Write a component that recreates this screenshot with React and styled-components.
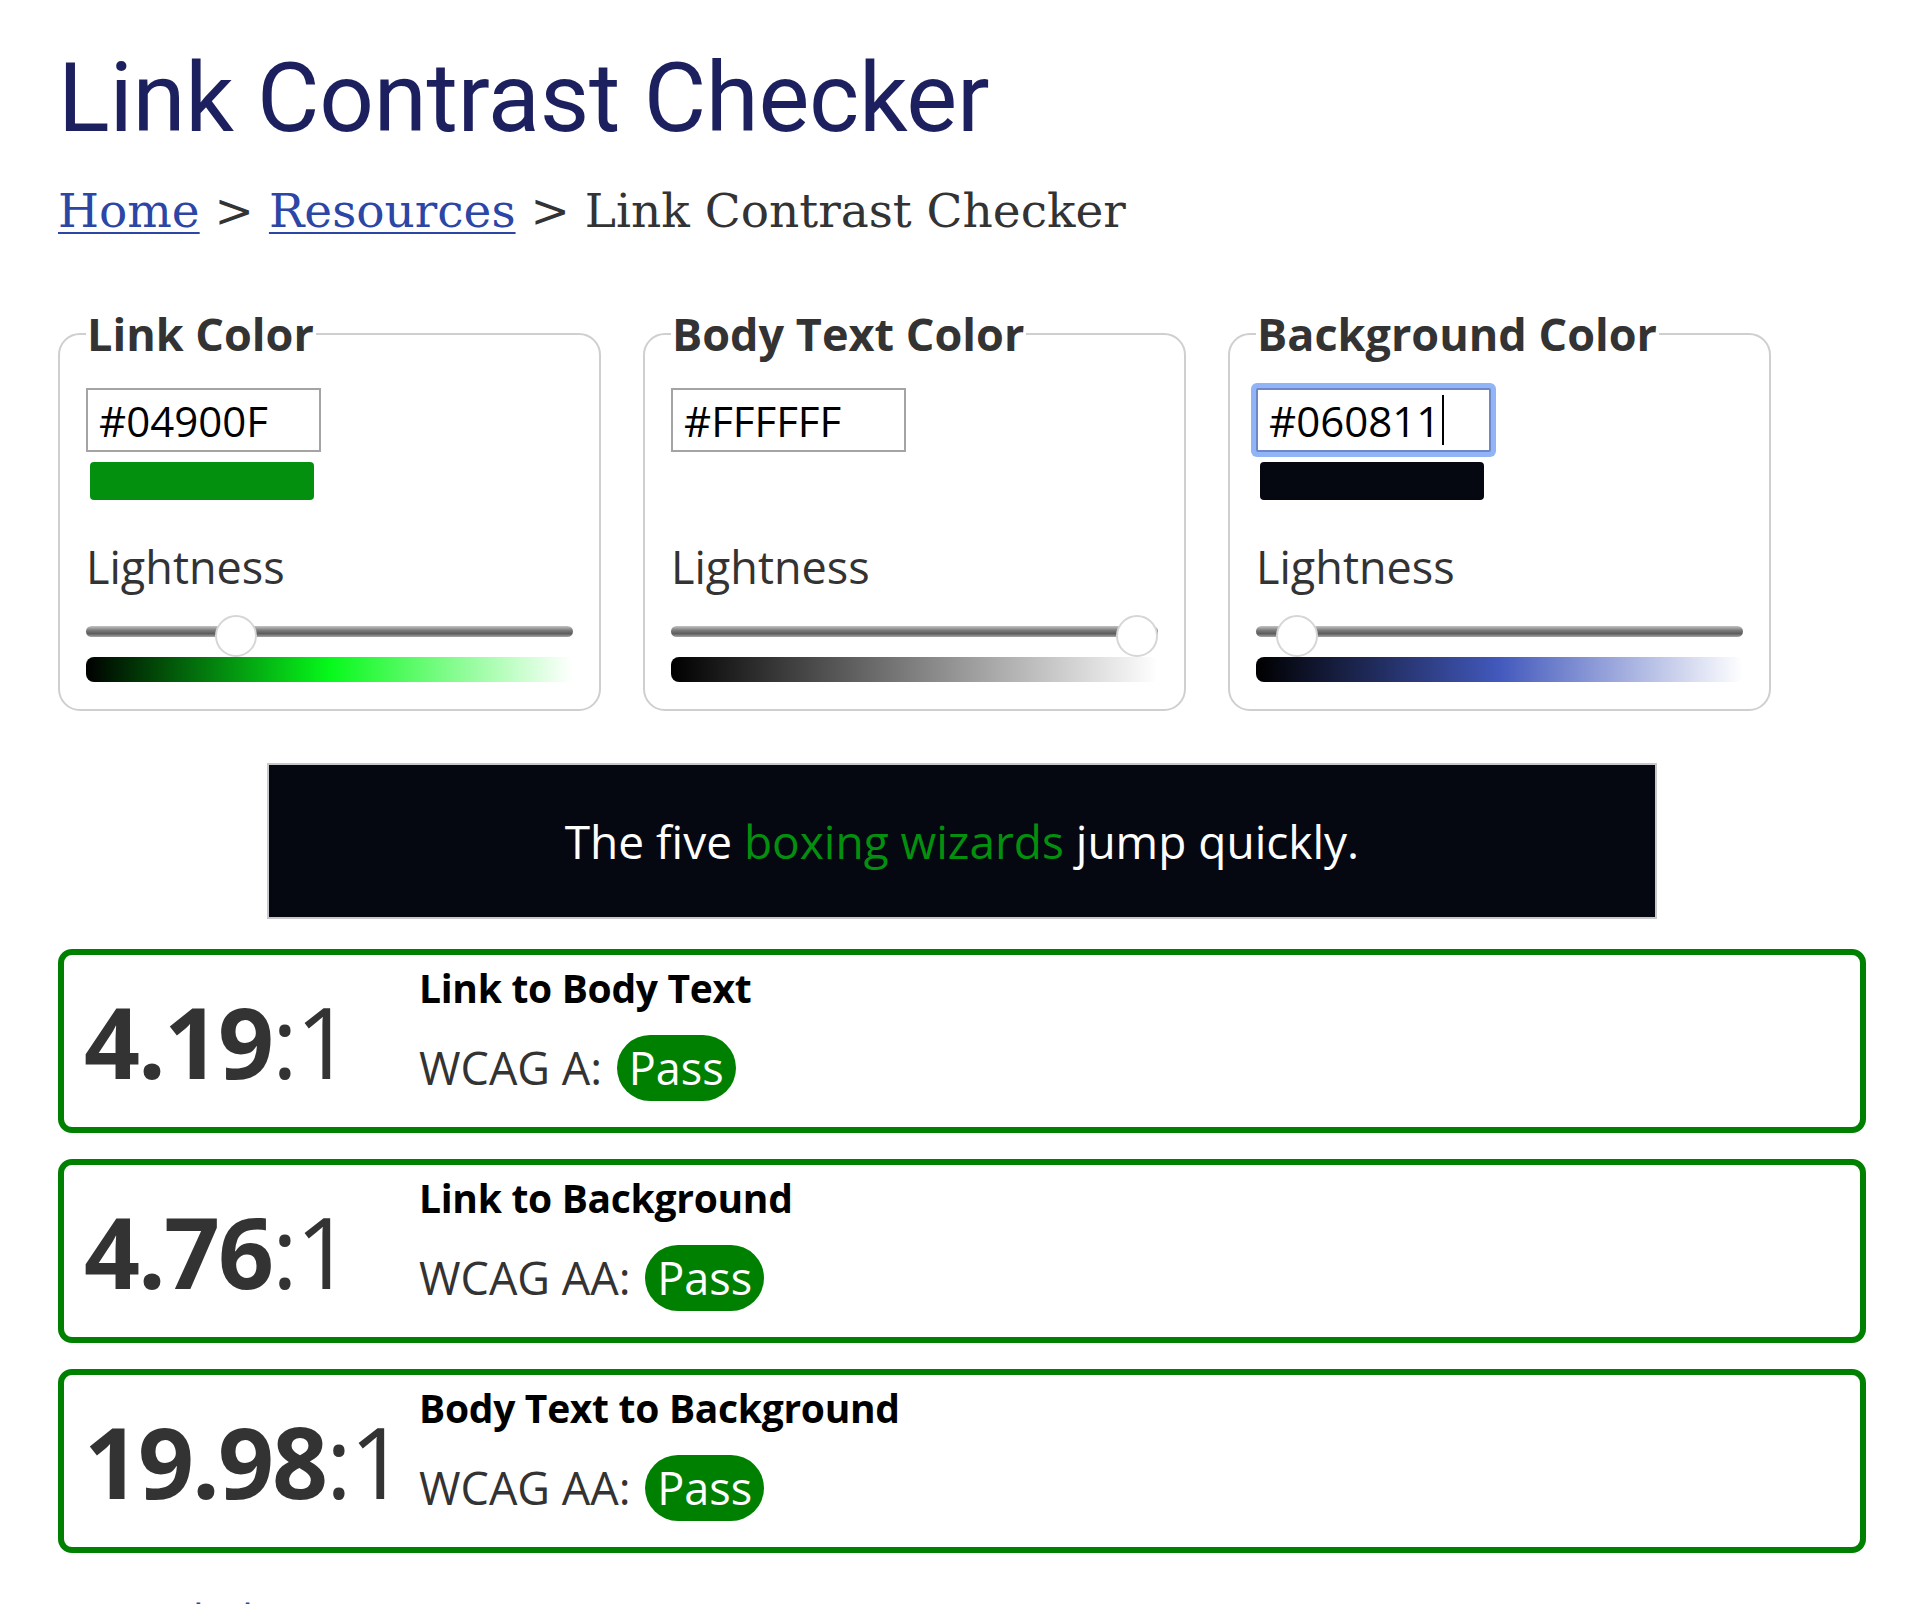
import React from 'react';
import styled, { createGlobalStyle, css } from 'styled-components';

const GlobalStyle = createGlobalStyle`
  * { box-sizing: border-box; }
  html, body { margin: 0; padding: 0; background: #fff; }
  body {
    font-family: "Open Sans", "Liberation Sans", sans-serif;
    color: #333;
  }
`;

const Page = styled.main`
  height: 1604px;
  overflow: hidden;
  padding: 42px 54px 0 58px;
`;

const Title = styled.h1`
  margin: 0;
  font-family: Roboto, "Liberation Sans", sans-serif;
  font-weight: 400;
  font-size: 96px;
  line-height: 112px;
  color: #1d205e;
  letter-spacing: -0.3px;
`;

const Breadcrumb = styled.nav`
  margin-top: 31px;
  font-family: "DejaVu Serif", "Liberation Serif", serif;
  font-size: 47px;
  line-height: 51px;
  color: #333;
  white-space: nowrap;
`;

const Crumb = styled.a`
  color: #2c46a6;
  text-decoration: underline;
  text-decoration-thickness: 2px;
  text-underline-offset: 5px;
`;

const Controls = styled.div`
  display: flex;
  gap: 42px;
  margin-top: 68px;
`;

const Panel = styled.fieldset`
  width: 543px;
  min-width: 0;
  margin: 0;
  padding: 24px 26px 27px;
  border: 2px solid #cfcfcf;
  border-radius: 22px;
`;

const Legend = styled.legend`
  padding: 0 2px 0 1px;
  font-weight: 700;
  font-size: 45px;
  line-height: 60px;
  color: #333;
`;

const HexField = styled.div`
  position: relative;
  width: 235px;
  height: 64px;
`;

const HexInput = styled.input`
  display: block;
  width: 235px;
  height: 64px;
  padding: 0 11px;
  border: 2px solid #a4a4a4;
  border-radius: 0;
  background: #fff;
  color: #000;
  font: 400 42px "Open Sans", "Liberation Sans", sans-serif;
  outline: none;
  ${(p) =>
    p.$focused &&
    css`
      border-color: #6d88c4;
      border-radius: 2px;
      box-shadow: 0 0 0 5px #90b4f6;
    `}
`;

const CaretLayer = styled.div`
  position: absolute;
  inset: 0;
  padding: 0 13px;
  display: flex;
  align-items: center;
  font: 400 42px "Open Sans", "Liberation Sans", sans-serif;
  white-space: pre;
  pointer-events: none;
`;

const Ghost = styled.span`
  visibility: hidden;
`;

const Caret = styled.span`
  display: inline-block;
  width: 2px;
  height: 50px;
  margin-left: 2px;
  background: #000;
`;

const Swatch = styled.div`
  width: 224px;
  height: 38px;
  margin: 10px 0 0 4px;
  border-radius: 4px;
  background: ${(p) => p.$color};
`;

const SliderLabel = styled.label`
  display: block;
  margin-top: 37px;
  font-size: 45px;
  line-height: 60px;
  color: #333;
`;

const Range = styled.input`
  -webkit-appearance: none;
  appearance: none;
  display: block;
  width: 100%;
  height: 42px;
  margin: 13px 0 0;
  padding: 0;
  background: transparent;

  &::-webkit-slider-runnable-track {
    height: 11px;
    border-radius: 6px;
    background: linear-gradient(
      to bottom,
      #c4c4c4 0%,
      #7a7a7a 40%,
      #5c5c5c 70%,
      #a8a8a8 100%
    );
  }
  &::-webkit-slider-thumb {
    -webkit-appearance: none;
    width: 42px;
    height: 42px;
    margin-top: -11px;
    border-radius: 50%;
    border: 2px solid #d6d6d6;
    background: #fff;
  }
  &::-moz-range-track {
    height: 11px;
    border-radius: 6px;
    background: linear-gradient(to bottom, #c4c4c4, #5c5c5c 70%, #a8a8a8);
  }
  &::-moz-range-thumb {
    width: 42px;
    height: 42px;
    border-radius: 50%;
    border: 2px solid #d6d6d6;
    background: #fff;
  }
`;

const Spectrum = styled.div`
  height: 25px;
  margin-top: 5px;
  border-radius: 8px;
  background: linear-gradient(to right, #000 0%, ${(p) => p.$mid} 50%, #fff 100%);
`;

const Sample = styled.div`
  width: 1390px;
  height: 156px;
  margin: 52px auto 0;
  display: flex;
  align-items: center;
  justify-content: center;
  background: #060811;
  border: 2px solid #c8c8c8;
  color: #fff;
  font-size: 46px;
`;

const SampleLink = styled.a`
  color: #04900f;
  text-decoration: none;
`;

const Results = styled.div`
  display: flex;
  flex-direction: column;
  gap: 26px;
  margin-top: 30px;
`;

const ResultCard = styled.section`
  display: flex;
  height: 184px;
  border: 6px solid #008000;
  border-radius: 14px;
`;

const Ratio = styled.div`
  flex: none;
  width: 355px;
  padding-left: 20px;
  display: flex;
  align-items: center;
  font-size: 98px;
  line-height: 1;
  color: #333;
  letter-spacing: -2px;
`;

const RatioValue = styled.strong`
  font-weight: 700;
`;

const Info = styled.div`
  padding-top: 6px;
`;

const InfoTitle = styled.h2`
  margin: 0;
  font-size: 39px;
  line-height: 54px;
  font-weight: 700;
  color: #000;
  letter-spacing: -0.3px;
`;

const Criteria = styled.p`
  margin: 20px 0 0;
  font-size: 45px;
  line-height: 60px;
  color: #333;
`;

const Badge = styled.span`
  display: inline-block;
  margin-left: 3px;
  padding: 3px 12px;
  border-radius: 33px;
  background: #008000;
  color: #fff;
  line-height: 60px;
`;

const Footer = styled.p`
  margin: 36px 0 0;
  font-size: 44px;
  line-height: 60px;
`;

const FooterLink = styled.a`
  color: #2c46a6;
  text-decoration: underline;
`;

const panels = [
  { id: 'link', title: 'Link Color', hex: '#04900F', lightness: 29, mid: 'hsl(125, 95%, 50%)' },
  { id: 'body', title: 'Body Text Color', hex: '#FFFFFF', lightness: 100, mid: 'hsl(0, 0%, 50%)' },
  { id: 'bg', title: 'Background Color', hex: '#060811', lightness: 4.5, mid: 'hsl(229, 48%, 50%)', focused: true },
];

const results = [
  { ratio: '4.19', title: 'Link to Body Text', level: 'WCAG A:' },
  { ratio: '4.76', title: 'Link to Background', level: 'WCAG AA:' },
  { ratio: '19.98', title: 'Body Text to Background', level: 'WCAG AA:' },
];

function ColorPanel({ panel }) {
  return (
    <Panel>
      <Legend>{panel.title}</Legend>
      <HexField>
        <HexInput
          type="text"
          defaultValue={panel.hex}
          aria-label={panel.title}
          $focused={panel.focused}
        />
        {panel.focused && (
          <CaretLayer aria-hidden="true">
            <Ghost>{panel.hex}</Ghost>
            <Caret />
          </CaretLayer>
        )}
      </HexField>
      <Swatch $color={panel.hex} />
      <SliderLabel htmlFor={`${panel.id}-l`}>Lightness</SliderLabel>
      <Range
        id={`${panel.id}-l`}
        type="range"
        min="0"
        max="100"
        step="0.1"
        defaultValue={panel.lightness}
      />
      <Spectrum $mid={panel.mid} />
    </Panel>
  );
}

export default function App() {
  return (
    <>
      <GlobalStyle />
      <Page>
        <Title>Link Contrast Checker</Title>
        <Breadcrumb>
          <Crumb href="#">Home</Crumb> &gt; <Crumb href="#">Resources</Crumb> &gt; Link Contrast Checker
        </Breadcrumb>
        <Controls>
          {panels.map((p) => (
            <ColorPanel key={p.id} panel={p} />
          ))}
        </Controls>
        <Sample>
          <span>
            The five <SampleLink href="#">boxing wizards</SampleLink> jump quickly.
          </span>
        </Sample>
        <Results>
          {results.map((r) => (
            <ResultCard key={r.title}>
              <Ratio>
                <span>
                  <RatioValue>{r.ratio}</RatioValue>:1
                </span>
              </Ratio>
              <Info>
                <InfoTitle>{r.title}</InfoTitle>
                <Criteria>
                  {r.level} <Badge>Pass</Badge>
                </Criteria>
              </Info>
            </ResultCard>
          ))}
        </Results>
        <Footer>
          <FooterLink href="#">permalink</FooterLink>
        </Footer>
      </Page>
    </>
  );
}
